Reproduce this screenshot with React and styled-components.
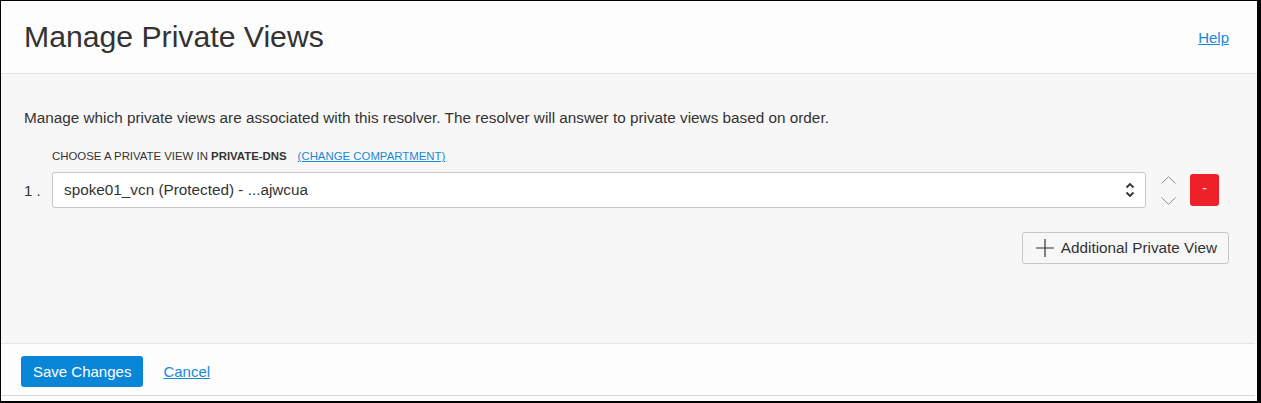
import styled, { createGlobalStyle } from 'styled-components';

const GlobalStyle = createGlobalStyle`
  html, body {
    margin: 0;
    padding: 0;
    background: #ffffff;
  }
  body {
    font-family: "Liberation Sans", Arial, Helvetica, sans-serif;
    color: #333333;
  }
`;

const Frame = styled.div`
  width: 1261px;
  height: 403px;
  box-sizing: border-box;
  border-style: solid;
  border-color: #000000;
  border-width: 1px 4px 2px 1px;
  display: flex;
  flex-direction: column;
  background: #fdfdfd;
`;

const Header = styled.header`
  height: 72px;
  flex: none;
  display: flex;
  align-items: center;
  justify-content: space-between;
  padding: 0 28px 0 23px;
  border-bottom: 1px solid #e5e5e5;
  background: #fdfdfd;
`;

const Title = styled.h1`
  margin: 0;
  font-size: 30.2px;
  font-weight: 400;
  color: #333333;
`;

const Link = styled.a`
  color: #1a88d9;
  font-size: ${(p) => (p.$small ? '11.4px' : '15px')};
  text-decoration: underline;
  cursor: pointer;
`;

const Body = styled.main`
  height: 269px;
  flex: none;
  box-sizing: border-box;
  background: #f7f7f7;
  padding: 34px 28px 0 23px;
  display: flex;
  flex-direction: column;
`;

const Description = styled.p`
  margin: 0;
  font-size: 15.3px;
  line-height: 19px;
  color: #333333;
`;

const FieldLabel = styled.div`
  margin: 22px 0 0 28px;
  font-size: 11.4px;
  line-height: 14px;
  color: #333333;
  text-transform: uppercase;

  b {
    font-weight: 700;
  }
`;

const LabelSpacer = styled.span`
  display: inline-block;
  width: 11px;
`;

const Row = styled.div`
  margin-top: 9px;
  display: flex;
  align-items: center;
`;

const Index = styled.span`
  width: 28px;
  flex: none;
  font-size: 15px;
  color: #333333;
`;

const Select = styled.div`
  flex: 1;
  height: 36px;
  box-sizing: border-box;
  border: 1px solid #c4c6ca;
  border-radius: 3px;
  background: #ffffff;
  display: flex;
  align-items: center;
  justify-content: space-between;
  padding: 0 10px 0 11px;
  font-size: 15.3px;
  color: #333333;
`;

const OrderButtons = styled.div`
  width: 24px;
  margin-left: 10px;
  display: flex;
  flex-direction: column;
  align-items: center;
  gap: 13px;
`;

const RemoveButton = styled.button`
  margin-left: 10px;
  margin-right: 10px;
  width: 29px;
  height: 32px;
  border: none;
  border-radius: 3px;
  background: #ee2128;
  color: #ffffff;
  font-family: inherit;
  font-size: 14px;
  padding: 0 0 4px;
`;

const AddRow = styled.div`
  margin-top: 24px;
  display: flex;
  justify-content: flex-end;
`;

const AddButton = styled.button`
  height: 32px;
  box-sizing: border-box;
  border: 1px solid #c4c6ca;
  border-radius: 3px;
  background: #f7f7f7;
  display: flex;
  align-items: center;
  gap: 7px;
  padding: 0 11px 0 13px;
  font-family: inherit;
  font-size: 15.3px;
  color: #333333;
`;

const Footer = styled.footer`
  height: 47px;
  flex: none;
  border-top: 1px solid #e5e5e5;
  border-bottom: 1px solid #d6d6d6;
  margin-right: 2px;
  display: flex;
  align-items: center;
  gap: 20px;
  padding: 4px 20px 0;
  background: #fdfdfd;
`;

const PrimaryButton = styled.button`
  height: 31px;
  border: none;
  border-radius: 3px;
  background: #0a86d8;
  color: #ffffff;
  font-family: inherit;
  font-size: 15px;
  padding: 0 12px;
`;

const Chevron = ({ up }) => (
  <svg width="15" height="8" viewBox="0 0 15 8" fill="none">
    <path
      d={up ? 'M0.5 7.5 L7.5 0.7 L14.5 7.5' : 'M0.5 0.5 L7.5 7.3 L14.5 0.5'}
      stroke="#8c8c8c"
      strokeWidth="1"
    />
  </svg>
);

const SelectArrows = () => (
  <svg width="10" height="16" viewBox="0 0 10 16" fill="none">
    <path d="M1.5 5.5 L5 2 L8.5 5.5" stroke="#333" strokeWidth="1.8" />
    <path d="M1.5 10.5 L5 14 L8.5 10.5" stroke="#333" strokeWidth="1.8" />
  </svg>
);

const PlusIcon = () => (
  <svg width="18" height="18" viewBox="0 0 18 18" fill="none">
    <path d="M9 0 V18 M0 9 H18" stroke="#333" strokeWidth="1.2" />
  </svg>
);

const App = () => (
  <>
    <GlobalStyle />
    <Frame>
      <Header>
        <Title>Manage Private Views</Title>
        <Link>Help</Link>
      </Header>
      <Body>
        <Description>
          Manage which private views are associated with this resolver. The resolver will answer to private views based on order.
        </Description>
        <FieldLabel>
          Choose a private view in <b>private-dns</b>
          <LabelSpacer />
          <Link $small>(Change Compartment)</Link>
        </FieldLabel>
        <Row>
          <Index>1 .</Index>
          <Select>
            <span>spoke01_vcn (Protected) - ...ajwcua</span>
            <SelectArrows />
          </Select>
          <OrderButtons>
            <Chevron up />
            <Chevron />
          </OrderButtons>
          <RemoveButton>-</RemoveButton>
        </Row>
        <AddRow>
          <AddButton>
            <PlusIcon />
            Additional Private View
          </AddButton>
        </AddRow>
      </Body>
      <Footer>
        <PrimaryButton>Save Changes</PrimaryButton>
        <Link>Cancel</Link>
      </Footer>
    </Frame>
  </>
);

export default App;
